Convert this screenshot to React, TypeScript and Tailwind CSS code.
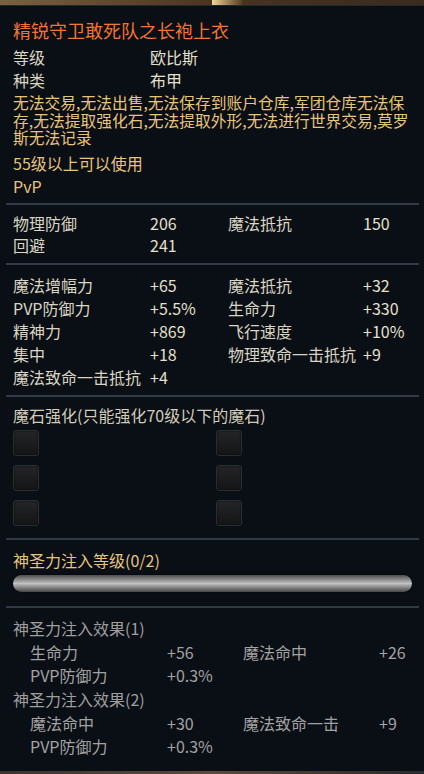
import React from "react";

const Sep = () => <div className="ml-[6px] mr-[5px] h-[2px] bg-[#2f3948]" />;

type Cell = [string, string];

const Row4 = ({ a, b, h = "h-[23px]" }: { a: Cell; b?: Cell; h?: string }) => (
  <div className={`flex items-center ${h} pl-[13px] text-[16px] text-[#d9d5c2]`}>
    <div className="w-[137px] whitespace-nowrap">{a[0]}</div>
    <div className="w-[78px] whitespace-nowrap text-[#e4e0cc]">{a[1]}</div>
    {b && (
      <>
        <div className="w-[135px] whitespace-nowrap">{b[0]}</div>
        <div className="whitespace-nowrap text-[#e4e0cc]">{b[1]}</div>
      </>
    )}
  </div>
);

const SubRow = ({ a, b }: { a: Cell; b?: Cell }) => (
  <div className="flex items-center h-[23.6px] pl-[30px] text-[16px] text-[#a2a2a2]">
    <div className="w-[137px] whitespace-nowrap">{a[0]}</div>
    <div className="w-[76px] whitespace-nowrap">{a[1]}</div>
    {b && (
      <>
        <div className="w-[136px] whitespace-nowrap">{b[0]}</div>
        <div className="whitespace-nowrap">{b[1]}</div>
      </>
    )}
  </div>
);

const Socket = () => (
  <div className="w-[26px] h-[26px] rounded-[3px] border border-[#2b2d30] bg-gradient-to-b from-[#232527] to-[#141517] shadow-[inset_0_0_2px_rgba(0,0,0,0.8)]" />
);

export default function App() {
  return (
    <div
      className="w-[424px] h-[774px] bg-[#0a0e15] overflow-hidden flex flex-col relative"
      style={{ fontFamily: '"Noto Sans CJK SC", "Noto Sans", sans-serif' }}
    >
      <div className="h-[5px] bg-gradient-to-r from-[#7a6140] via-[#4a3420] to-[#3b2a1e] relative">
        <div className="absolute left-[212px] top-0 h-[5px] w-[30px] bg-gradient-to-r from-[#f0d89a] to-[#5c3f22]" />
      </div>
      <div className="h-[1px] bg-[#1c2c30]" />
      <div className="h-[36px] pl-[13px] flex items-end">
        <div className="h-[24px] leading-[24px] text-[18px] text-[#f27532] whitespace-nowrap">
          精锐守卫敢死队之长袍上衣
        </div>
      </div>
      <div className="h-[3px]" />
      <Row4 a={["等级", "欧比斯"]} />
      <Row4 a={["种类", "布甲"]} />
      <div className="h-[3px]" />
      <div className="pl-[13px] text-[15.75px] leading-[17.5px] text-[#e8c47b] whitespace-nowrap">
        <div>无法交易,无法出售,无法保存到账户仓库,军团仓库无法保</div>
        <div>存,无法提取强化石,无法提取外形,无法进行世界交易,莫罗</div>
        <div>斯无法记录</div>
      </div>
      <div className="h-[5px]" />
      <div className="pl-[13px] h-[23px] flex items-center text-[16px] text-[#e8c47b]">55级以上可以使用</div>
      <div className="pl-[13px] h-[23px] flex items-center text-[16px] text-[#e8c47b]">PvP</div>
      <div className="h-[5px]" />
      <Sep />
      <div className="h-[7px]" />
      <Row4 h="h-[22px]" a={["物理防御", "206"]} b={["魔法抵抗", "150"]} />
      <Row4 h="h-[22px]" a={["回避", "241"]} />
      <div className="h-[7px]" />
      <Sep />
      <div className="h-[9px]" />
      <Row4 a={["魔法增幅力", "+65"]} b={["魔法抵抗", "+32"]} />
      <Row4 a={["PVP防御力", "+5.5%"]} b={["生命力", "+330"]} />
      <Row4 a={["精神力", "+869"]} b={["飞行速度", "+10%"]} />
      <Row4 a={["集中", "+18"]} b={["物理致命一击抵抗", "+9"]} />
      <Row4 a={["魔法致命一击抵抗", "+4"]} />
      <div className="h-[6px]" />
      <Sep />
      <div className="h-[7px]" />
      <div className="pl-[13px] h-[22px] flex items-center text-[16px] text-[#d2cdb9] whitespace-nowrap">
        魔石强化(只能强化70级以下的魔石)
      </div>
      <div className="h-[4px]" />
      <div className="grid grid-cols-[203px_auto] gap-y-[9px] pl-[13px]">
        <Socket />
        <Socket />
        <Socket />
        <Socket />
        <Socket />
        <Socket />
      </div>
      <div className="h-[12px]" />
      <Sep />
      <div className="h-[9px]" />
      <div className="pl-[13px] h-[22px] flex items-center text-[16px] text-[#e6c47c] whitespace-nowrap">
        神圣力注入等级(0/2)
      </div>
      <div className="h-[4px]" />
      <div className="ml-[13px] mr-[12px] h-[17px] rounded-full bg-gradient-to-b from-[#4e4e4e] via-[#c2c2c2] to-[#474747] shadow-[0_0_2px_rgba(0,0,0,0.9)]" />
      <div className="h-[14px]" />
      <Sep />
      <div className="h-[9px]" />
      <div className="pl-[13px] h-[23.6px] flex items-center text-[16px] text-[#9f9f9f] whitespace-nowrap">
        神圣力注入效果(1)
      </div>
      <SubRow a={["生命力", "+56"]} b={["魔法命中", "+26"]} />
      <SubRow a={["PVP防御力", "+0.3%"]} />
      <div className="pl-[13px] h-[23.6px] flex items-center text-[16px] text-[#9f9f9f] whitespace-nowrap">
        神圣力注入效果(2)
      </div>
      <SubRow a={["魔法命中", "+30"]} b={["魔法致命一击", "+9"]} />
      <SubRow a={["PVP防御力", "+0.3%"]} />
      <div className="absolute left-0 right-0 bottom-0 h-[3px] bg-gradient-to-r from-[#3a3530] via-[#5a4a3a] to-[#2a2a2a]" />
    </div>
  );
}
